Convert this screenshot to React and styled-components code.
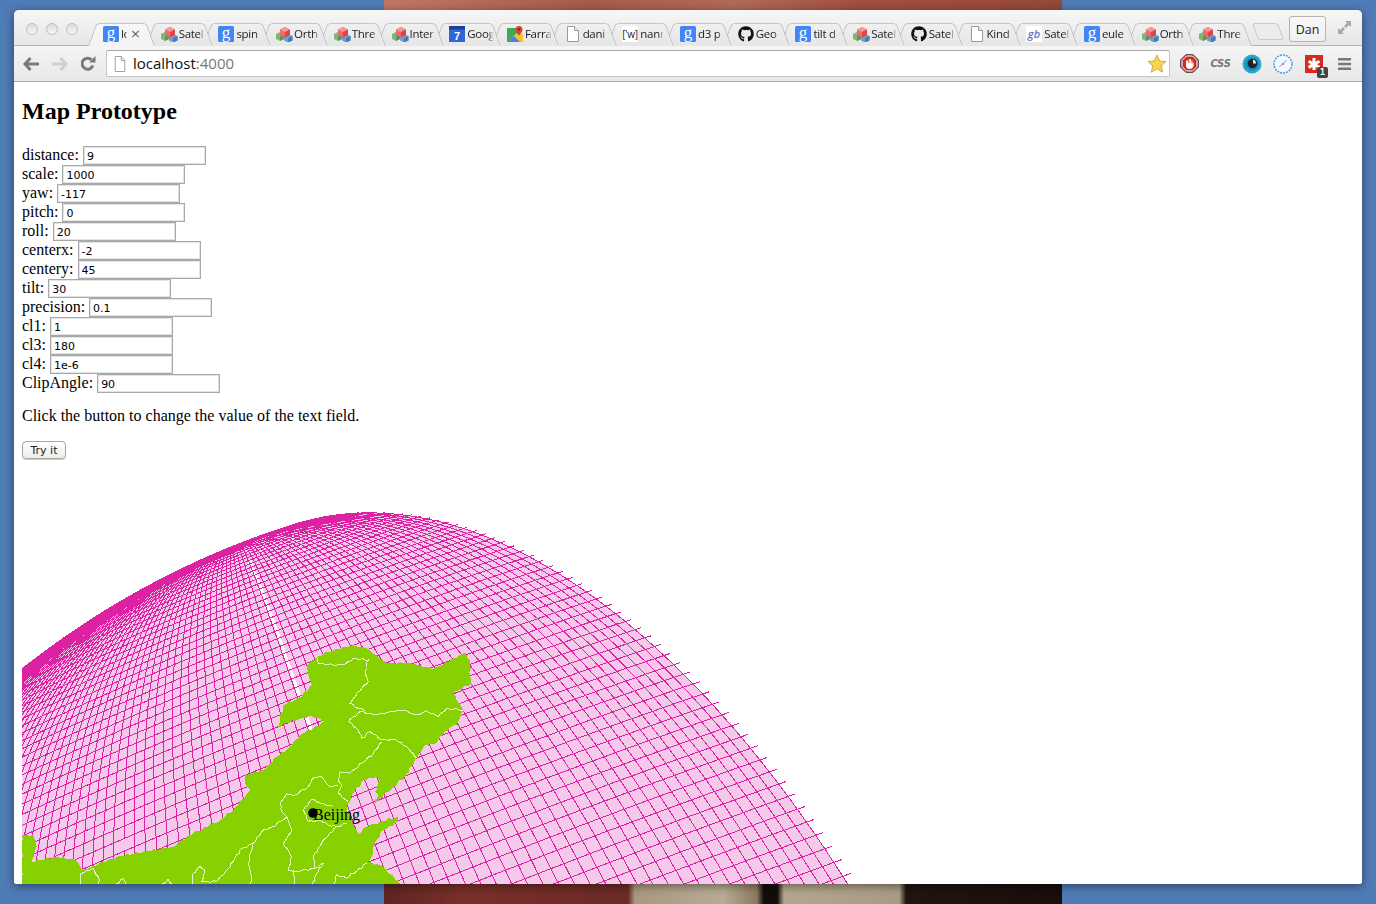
import React, { useMemo } from 'react';
import styled, { createGlobalStyle } from 'styled-components';
import { FaGithub } from 'react-icons/fa';

const Global = createGlobalStyle`
  html, body { margin: 0; padding: 0; height: 100%; overflow: hidden; }
  body { background: #4f7bb6; font-family: "Liberation Serif", serif; }
`;
const Desktop = styled.div`
  width: 1376px; height: 904px; box-sizing: border-box; padding: 10px 14px 20px; overflow: hidden;
  background:
    linear-gradient(90deg,#5e2522 0,#7a2f2a 12%,#6a2a26 36%,#a89880 37%,#b8aa94 50%,#8a7a62 55%,#120c0a 56%,#120c0a 58%,#b4a68e 59%,#a89a84 76%,#221410 77%,#180e0c 99%) 384px 884px / 678px 20px no-repeat,
    linear-gradient(90deg,#c47664,#a85a48 30%,#b06a58 52%,#a24e40 70%,#94483a) 384px 0 / 678px 10px no-repeat,
    #4f7bb6;
`;
const Win = styled.div`
  width: 1348px; height: 874px; border-radius: 5px 5px 3px 3px; overflow: hidden; display: flex; flex-direction: column; background: #fff;
  box-shadow: 0 2px 10px rgba(0,0,0,.45);
`;
const TabStrip = styled.div`
  height: 36px; flex: none; box-sizing: border-box; display: flex; align-items: flex-end; position: relative;
  background: linear-gradient(#f7f7f7,#e6e6e6); border-bottom: 1px solid #b4b4b4;
`;
const Lights = styled.div`display:flex; gap: 8px; width: 62px; padding-left: 12px; align-self: flex-start; padding-top: 13px; flex:none;`;
const Light = styled.span`flex:none; width: 12px; height: 12px; box-sizing:border-box; border-radius: 50%; border: 1px solid #bcbcbc; background: linear-gradient(#dcdcdc,#f6f6f6);`;
const Tabs = styled.div`display:flex; height: 23px; margin-bottom:-1px;`;
const Tab = styled.div`
  width: 67px; margin-right: -9.3px; box-sizing: border-box; display:flex; align-items:center; gap: 2px; padding: 0 0 2px 15px; position: relative; flex:none;
  font: 11.5px "Open Sans", sans-serif; color: #222; z-index: ${p=>p.$z};
  &::before, &::after { content:""; position:absolute; top: 0; bottom: 0; width: 55%; box-sizing:border-box; z-index: -1; transform-origin: bottom;
    border-top: 1px solid #c6c6c6;
    background: ${p=>p.$active?'linear-gradient(#f7f7f7,#f3f3f3)':'linear-gradient(#f0f0f0,#e6e6e6)'};
  }
  &::before { left: 0; transform: skewX(-20deg); border-left: 1px solid #b8b8b8; border-radius: 4px 0 0 0; }
  &::after { right: 0; transform: skewX(20deg); border-right: 1px solid #b8b8b8; border-radius: 0 4px 0 0; }
`;
const TabTitle = styled.span`
  width: ${p=>p.$w}px; overflow:hidden; white-space:nowrap; flex:none; letter-spacing:-.3px;
  -webkit-mask-image: linear-gradient(90deg,#000 76%,transparent);
  mask-image: linear-gradient(90deg,#000 76%,transparent);
`;
const Close = styled.span`font: 13px "DejaVu Sans", sans-serif; color:#666; margin-left:1px;`;
const FavBox = styled.span`flex:none; width:16px; height:16px; display:block; line-height:0;`;
const NewTab = styled.div`
  width: 24px; height: 15px; margin: 0 0 3px 13px; border:1px solid #c8c8c8; border-radius:3px; background:#ececec; transform: skewX(20deg); flex:none;
`;
const UserBtn = styled.div`
  position:absolute; left:1275px; top:6px; width:37px; height:26px; box-sizing:border-box; border:1px solid #b4b4b4; border-radius:3px;
  display:flex; align-items:center; justify-content:center; font:12.5px "Open Sans",sans-serif; color:#222; background:linear-gradient(#f8f8f8,#f0f0f0);
`;
const FullIcon = styled.div`position:absolute; left:1323px; top:10px; line-height:0;`;
const Toolbar = styled.div`
  height: 36px; flex:none; box-sizing:border-box; display:flex; align-items:center; padding: 0 0 0 9px;
  background: linear-gradient(#f5f5f5,#e8e8e8); border-bottom:1px solid #a9a9a9;
`;
const NavBtns = styled.div`display:flex; gap:13px; width:83px; flex:none; align-items:center; line-height:0;`;
const Omni = styled.div`
  width: 1064px; height: 27px; flex:none; box-sizing:border-box; background:#fff; border:1px solid #c4c4c4; border-top-color:#a8a8a8; border-radius:2px;
  display:flex; align-items:center; padding: 0 2px 0 6px; gap:6px; font: 15px "Open Sans",sans-serif; color:#111;
`;
const Port = styled.span`color:#777;`;
const Url = styled.span`flex:1; padding-bottom:2px;`;
const Ext = styled.div`display:flex; align-items:center; flex:none; margin-left:4px; line-height:0;`;
const ExtSlot = styled.div`width:31px; display:flex; justify-content:center; align-items:center; position:relative;`;
const CssTxt = styled.span`font: italic bold 10px "DejaVu Sans",sans-serif; color:#777; line-height:1; letter-spacing:-.3px;`;
const Badge = styled.span`
  position:absolute; right:1px; bottom:-5px; width:11px; height:11px; background:#444; border-radius:2px; color:#fff; font: bold 9px "DejaVu Sans Mono",monospace; line-height:11px; text-align:center;
`;
const Page = styled.div`flex:1; min-height:0; overflow:hidden; padding: 0 8px; background:#fff; color:#000; font: 16px/19px "Liberation Serif",serif;`;
const Title = styled.h2`margin: 16px 0 21px; font: bold 24px/27px "Liberation Serif",serif;`;
const Row = styled.div`display:flex; gap:4px; height:19px; align-items:center;`;
const Label = styled.span`line-height:17px; height:19px;`;
const Field = styled.input`
  width:123px; height:19px; box-sizing:border-box; border:1px solid #a9a9a9; outline:none; padding:2px 0 0 3px; margin:0;
  box-shadow: inset 0 0 0 1px #e4e4e4;
  font: 11px "DejaVu Sans",sans-serif; color:#000; background:#fff;
`;
const Para = styled.p`margin:13px 0 16px;`;
const Btn = styled.button`
  display:block; width:44px; height:18px; padding:0; border:1px solid #a6a6a6; border-radius:4px; background:linear-gradient(#fff,#ececec);
  font: 11px "DejaVu Sans",sans-serif; color:#222; box-shadow:0 1px 0 #ccc;
`;
const MapSvg = styled.svg`display:block; margin-top:11px; overflow:hidden;`;

/* --- satellite projection, same parameters as the form --- */
const rad = Math.PI/180;
const DIST = 9, om = 30*rad, cO = Math.cos(om), sO = Math.sin(om), SCALE = 1000;
function raw(l, f){
  const c = Math.cos(f), k = (DIST-1)/(DIST-c*Math.cos(l));
  const x = k*c*Math.sin(l), y = k*Math.sin(f), A = y*sO/(DIST-1)+cO;
  return [x*cO/A, y/A];
}
const dl=-117*rad, dg=20*rad, cdg=Math.cos(dg), sdg=Math.sin(dg);
function rot(lon,lat){
  const l=lon*rad+dl, f=lat*rad, cf=Math.cos(f);
  const x=cf*Math.cos(l), y=Math.sin(l)*cf, z=Math.sin(f);
  return [Math.atan2(y*cdg-z*sdg, x), Math.asin(z*cdg+y*sdg)];
}
const OX=22, OY=470;
const bj = (()=>{const r=rot(116.4,39.9); const q=raw(r[0],r[1]); return [SCALE*q[0],-SCALE*q[1]];})();
const tx = 315-OX-bj[0], ty = 813-OY-bj[1];
function proj(lon,lat){
  const r=rot(lon,lat);
  if(Math.cos(r[1])*Math.cos(r[0])<0) return null;
  const q=raw(r[0],r[1]);
  return [tx+SCALE*q[0], ty-SCALE*q[1]];
}
const inView=q=>q&&q[0]>-60&&q[0]<1400&&q[1]>-60&&q[1]<480;
function line(pts){
  let d='', on=false, prev=null;
  for(const p of pts){
    const q=proj(p[0],p[1]);
    if(!inView(q)&&!inView(prev)){on=false;prev=q;continue;}
    if(!q){on=false;prev=q;continue;}
    d+=(on?'L':'M')+q[0].toFixed(1)+' '+q[1].toFixed(1); on=true; prev=q;
  }
  return d;
}
const LEDGE=150, WEDGE=27;
function graticule(){
  let d='';
  for(let lon=WEDGE;lon<=LEDGE;lon+=1){const a=[];for(let lat=-90;lat<=90;lat+=1)a.push([lon,lat]);d+=line(a);}
  for(let lat=-89;lat<90;lat+=1){const a=[];for(let lon=WEDGE;lon<=LEDGE;lon+=1)a.push([lon,lat]);a.push([LEDGE+.7,lat]);d+=line(a);}
  return d;
}
function globeFill(){
  const pts=[[1000,440]];
  let top=null;
  for(let lat=0;lat<=89;lat+=1){const q=proj(LEDGE,lat); if(!q)break; if(q[1]<440){ if(!top||q[1]<top[1]){top=q; pts.push(q);} else break; } }
  const th=Math.acos(1/DIST), arc=[];
  for(let t=0;t<360;t+=1){
    const x=Math.cos(th), y=Math.sin(th)*Math.cos(t*rad), z=Math.sin(th)*Math.sin(t*rad);
    const q=raw(Math.atan2(y,x),Math.asin(z));
    arc.push([tx+SCALE*q[0],ty-SCALE*q[1]]);
  }
  const left=arc.filter(q=>q[0]<top[0]-70&&q[1]<440&&q[0]>-100).sort((a,b)=>b[0]-a[0]);
  left.forEach(q=>pts.push(q));
  pts.push([-100,440]);
  return 'M'+pts.map(p=>p[0].toFixed(1)+' '+p[1].toFixed(1)).join('L')+'Z';
}
function seam(){ const a=[]; for(let lat=32;lat<=72;lat+=1)a.push([118.2,lat]); return line(a); }

/* --- land, traced from the reference at 3x, origin (0,640), with a small deterministic wobble --- */
function wobble(pts,amp){
  const out=[]; let n=0;
  for(let i=0;i<pts.length-1;i++){
    const [x0,y0]=pts[i],[x1,y1]=pts[i+1];
    const len=Math.hypot(x1-x0,y1-y0), steps=Math.max(1,Math.round(len/10));
    for(let s=0;s<steps;s++){
      const t=s/steps; n++;
      const j=s===0?0:amp;
      out.push([x0+(x1-x0)*t+j*Math.sin(n*1.7)*Math.cos(n*.6), y0+(y1-y0)*t+j*Math.sin(n*2.3+1)]);
    }
  }
  out.push(pts[pts.length-1]);
  return out;
}
const Zp=(pts,amp=3)=>'M'+wobble(pts,amp).map(([x,y])=>(x/3-OX).toFixed(1)+' '+(640+y/3-OY).toFixed(1)).join('L');
const LAND=[[835,262],[850,195],[905,170],[935,135],[925,100],[920,80],[950,50],[1000,30],[1060,15],[1100,25],[1160,70],[1230,68],[1300,88],[1360,55],[1395,38],[1410,60],[1412,130],[1360,160],[1390,210],[1375,245],[1320,290],[1310,310],[1275,315],[1250,355],[1215,410],[1175,445],[1125,490],[1135,465],[1125,455],[1140,420],[1125,412],[1090,420],[1060,460],[1045,490],[1040,510],[1060,550],[1075,582],[1100,560],[1140,545],[1195,530],[1195,545],[1150,570],[1125,610],[1115,650],[1105,665],[1150,680],[1200,732],[1220,760],[66,760],[66,585],[100,585],[110,620],[95,665],[170,650],[225,660],[250,690],[350,650],[430,635],[520,620],[560,590],[660,540],[700,510],[750,450],[735,430],[735,405],[790,390],[830,350],[870,320],[900,285],[975,245],[935,228],[905,235],[860,250],[835,262]];
const BORDERS=[
 [[950,50],[955,70],[1000,75],[1030,75],[1060,55],[1105,60],[1095,100],[1105,125],[1085,145],[1050,190],[1075,205],[1095,212]],
 [[1080,215],[1130,225],[1170,215],[1210,210],[1250,225],[1280,212],[1315,230],[1340,205],[1390,210]],
 [[1080,215],[1045,245],[1075,270],[1085,295],[1110,275],[1145,300],[1185,298],[1220,320],[1250,355]],
 [[1145,305],[1120,340],[1050,400],[1020,395],[1015,420],[1025,435],[1015,460],[1045,485]],
 [[1015,435],[990,440],[960,408],[935,420],[925,440],[885,465],[860,462],[840,490],[845,515],[860,530],[820,560],[790,570],[760,610],[720,630],[690,680],[650,725],[605,725],[615,690],[600,680],[580,700],[575,740]],
 [[860,530],[875,570],[850,610],[875,650],[865,690],[885,695],[945,685],[970,670],[945,710],[935,740]],
 [[1040,550],[1010,560],[970,600],[940,650],[945,685]],
 [[935,478],[910,510],[925,545],[960,540],[985,555],[1010,560]],
 [[935,478],[965,490],[1000,500]],
 [[880,690],[885,740]],
 [[760,610],[745,670],[755,710],[750,740]],
 [[240,740],[242,700],[280,685],[298,720],[290,740]],
 [[340,740],[370,715],[378,740]],
 [[480,740],[505,718],[520,740]],
 [[1000,740],[1010,705],[1040,715],[1100,670]],
];

/* --- favicons --- */
const Google=()=> <svg width="16" height="16" viewBox="0 0 16 16"><rect width="16" height="16" rx="1.5" fill="#4285f4"/><text x="8" y="11.500" textAnchor="middle" fontFamily="Liberation Serif" fontSize="17" fill="#fff">g</text></svg>;
const Cubes=()=> <svg width="17" height="16" viewBox="0 0 17 16">
  <path d="M0 8l4-2 4 2v5l-4 2-4-2z" fill="#7fb77a"/><path d="M4 10l4-2v5l-4 2z" fill="#5d9458"/>
  <path d="M8 10l4-2 4.500 2v4.500L12 16.500 8 14.500z" fill="#6f9fd0"/><path d="M12 12l4.500-2v4.500L12 16.500z" fill="#4a7cb4"/>
  <path d="M4 3.500L9 1l5 2.500V9l-5 2.500L4 9z" fill="#ee6a6a"/><path d="M4 3.500L9 1l5 2.500L9 6z" fill="#f49a9a"/><path d="M9 6l5-2.500V9l-5 2.500z" fill="#d84848"/>
</svg>;
const Doc=({w=16})=> <svg width={w} height="16" viewBox="0 0 16 16" preserveAspectRatio="none"><path d="M2.500.5h7l4 4v11h-11z" fill="#fff" stroke="#9a9a9a"/><path d="M9.500.5v4h4" fill="#eee" stroke="#9a9a9a"/></svg>;
const Calendar=()=> <svg width="16" height="16" viewBox="0 0 16 16"><rect width="16" height="16" fill="#2f66d8"/><rect width="16" height="3.500" fill="#1d3f9a"/><text x="8" y="14" textAnchor="middle" fontFamily="Liberation Sans" fontWeight="bold" fontSize="11" fill="#fff">7</text></svg>;
const Maps=()=> <svg width="16" height="16" viewBox="0 0 16 16"><path d="M0 2h10v14H0z" fill="#3fa856"/><path d="M0 16L12 5l4 4v7z" fill="#f4c430"/><path d="M0 16l7-6 6 6z" fill="#4a80e8"/><path d="M12 0a3.500 3.500 0 0 1 3.500 3.500C15.500 6 12 9.500 12 9.500S8.500 6 8.500 3.500A3.500 3.500 0 0 1 12 0z" fill="#e04030"/><circle cx="12" cy="3.500" r="1.200" fill="#902018"/></svg>;
const Wiki=()=> <svg width="16" height="16" viewBox="0 0 16 16"><rect width="16" height="16" fill="#fff"/><text x="8" y="12" textAnchor="middle" fontFamily="Open Sans" fontSize="10" letterSpacing="-.3" fill="#222">['w]</text></svg>;
const Gb=()=> <svg width="16" height="16" viewBox="0 0 16 16"><rect width="16" height="16" fill="#fff"/><text x="8" y="12" textAnchor="middle" fontFamily="Open Sans" fontStyle="italic" fontSize="11" fontWeight="600" fill="#6a72c0">gb</text></svg>;
const Hub=()=> <FaGithub size={16} color="#111"/>;
const ICONS={g:Google,c:Cubes,d:Doc,k:Calendar,m:Maps,w:Wiki,b:Gb,h:Hub};

const TABS=[['g','lo',6],['c','Satel',26],['g','spin',26],['c','Orth',26],['c','Thre',26],['c','Inter',26],['k','Goog',27],['m','Farra',27],['d','dani',25],['w','nanr',24],['g','d3 p',26],['h','Geo',24],['g','tilt d',26],['c','Satel',26],['h','Satel',26],['d','Kind',26],['b','Satel',26],['g','eule',26],['c','Orth',26],['c','Thre',26]];
const FIELDS=[['distance','9'],['scale','1000'],['yaw','-117'],['pitch','0'],['roll','20'],['centerx','-2'],['centery','45'],['tilt','30'],['precision','0.1'],['cl1','1'],['cl3','180'],['cl4','1e-6'],['ClipAngle','90']];

const Back=({c})=> <svg width="16" height="14" viewBox="0 0 16 14"><path d="M7.500 1L2 7l5.500 6M2.500 7H16" fill="none" stroke={c} strokeWidth="3"/></svg>;
const Fwd=({c})=> <svg width="16" height="14" viewBox="0 0 16 14"><path d="M8.500 1L14 7l-5.500 6M13.500 7H0" fill="none" stroke={c} strokeWidth="3"/></svg>;
const Reload=()=> <svg width="16" height="16" viewBox="1.500 0 16 16"><path d="M13.300 9.500A5.500 5.500 0 1 1 12 3.800" fill="none" stroke="#7a7a7a" strokeWidth="3"/><path d="M9.500 6.500H16V0z" fill="#7a7a7a"/></svg>;

const App=()=>{
  const grid=useMemo(graticule,[]);
  const fill=useMemo(globeFill,[]);
  const sm=useMemo(seam,[]);
  return <>
    <Global/>
    <Desktop><Win>
      <TabStrip>
        <Lights><Light/><Light/><Light/></Lights>
        <Tabs>
          {TABS.map(([ic,t,w],i)=>{const I=ICONS[ic];return <Tab key={i} $active={i===0} $z={30-i}><FavBox><I/></FavBox><TabTitle $w={w}>{t}</TabTitle>{i===0&&<Close>×</Close>}</Tab>;})}
          <NewTab/>
        </Tabs>
        <UserBtn>Dan</UserBtn>
        <FullIcon><svg width="15" height="15" viewBox="0 0 15 15" fill="#a8a8a8"><path d="M8 1h6v6l-2-2-3 3-2-2 3-3zM1 8v6h6l-2-2 3-3-2-2-3 3z"/></svg></FullIcon>
      </TabStrip>
      <Toolbar>
        <NavBtns><Back c="#7a7a7a"/><Fwd c="#cfcfcf"/><Reload/></NavBtns>
        <Omni>
          <Doc w={14}/>
          <Url>localhost<Port>:4000</Port></Url>
          <svg width="20" height="20" viewBox="0 0 20 20"><path d="M10 1l2.700 6 6.300.6-4.800 4.200 1.500 6.400L10 14.800l-5.700 3.400 1.500-6.400L1 7.600 7.300 7z" fill="#f9d648" stroke="#c9a860"/></svg>
        </Omni>
        <Ext>
          <ExtSlot><svg width="19" height="19" viewBox="0 0 19 19"><path d="M6 .5h7L18.500 6v7L13 18.500H6L.5 13V6z" fill="#d42a20" stroke="#555"/><path d="M6.500 2h6L17 6.500v6L12.500 17h-6L2 12.500v-6z" fill="none" stroke="#fff" strokeWidth="1"/><path d="M6 7.500v4c0 2.500 1.500 3.500 3.500 3.500s3.500-1.200 4-3l.5-3-1 .3-.5 1.200V6.500h-1V9h-.4V5h-1v4h-.4V5h-1v4h-.6V6.500H6.500z" fill="#fff"/></svg></ExtSlot>
          <ExtSlot><CssTxt>CSS</CssTxt></ExtSlot>
          <ExtSlot><svg width="20" height="20" viewBox="0 0 20 20"><circle cx="10" cy="10" r="9.500" fill="#2aa8d0"/><circle cx="10" cy="10" r="7" fill="#1890b8"/><circle cx="10.500" cy="9.500" r="4.800" fill="#223"/><path d="M11 5.500a4 4 0 0 1 3 4h-3z" fill="#e8e8e8"/></svg></ExtSlot>
          <ExtSlot><svg width="20" height="20" viewBox="0 0 20 20"><circle cx="10" cy="10" r="9" fill="#f4faff" stroke="#4a9ae8" strokeWidth="1.500" strokeDasharray="2 1"/><path d="M10 10L6.500 12.500M10 10l3.500-4" stroke="#6aa4dc" strokeWidth="1"/><circle cx="10" cy="10" r="1" fill="#c86060"/></svg></ExtSlot>
          <ExtSlot><svg width="18" height="18" viewBox="0 0 18 18"><rect width="18" height="18" fill="#d82a1c"/><path d="M7.500 3h3v3.700l3.200-1.800 1.500 2.600L12 9.300l3.200 1.800-1.500 2.600-3.200-1.800V15h-3v-3.100l-3.200 1.800-1.500-2.600L6 9.300 2.800 7.500l1.500-2.600 3.200 1.800z" fill="#fff"/></svg><Badge>1</Badge></ExtSlot>
          <ExtSlot><svg width="14" height="14" viewBox="0 0 14 14" fill="#777"><rect y="1" width="13" height="2.500" rx=".5"/><rect y="5.700" width="13" height="2.500" rx=".5"/><rect y="10.400" width="13" height="2.500" rx=".5"/></svg></ExtSlot>
        </Ext>
      </Toolbar>
      <Page>
        <Title>Map Prototype</Title>
        {FIELDS.map(([l,v])=> <Row key={l}><Label>{l}:</Label><Field readOnly value={v}/></Row>)}
        <Para>Click the button to change the value of the text field.</Para>
        <Btn>Try it</Btn>
        <MapSvg width="1332" height="414" shapeRendering="crispEdges">
          <path d={fill} fill="#f5c9ea"/>
          <path d={sm} fill="none" stroke="#fff" strokeWidth="4"/>
          <path d={grid} fill="none" stroke="#dc22a2" strokeWidth="1"/>
          <path d={Zp(LAND)+'Z'} fill="#87d100"/>
          {BORDERS.map((b,i)=> <path key={i} d={Zp(b,2.5)} fill="none" stroke="#e6f6c4" strokeWidth="1"/>)}
          <circle cx={313-OX} cy={813-OY} r="4.800" fill="#000" shapeRendering="auto"/>
          <text x={313-OX} y={820-OY} fontFamily="Liberation Serif" fontSize="16" fill="#000">Beijing</text>
        </MapSvg>
      </Page>
    </Win></Desktop>
  </>;
};
export default App;
